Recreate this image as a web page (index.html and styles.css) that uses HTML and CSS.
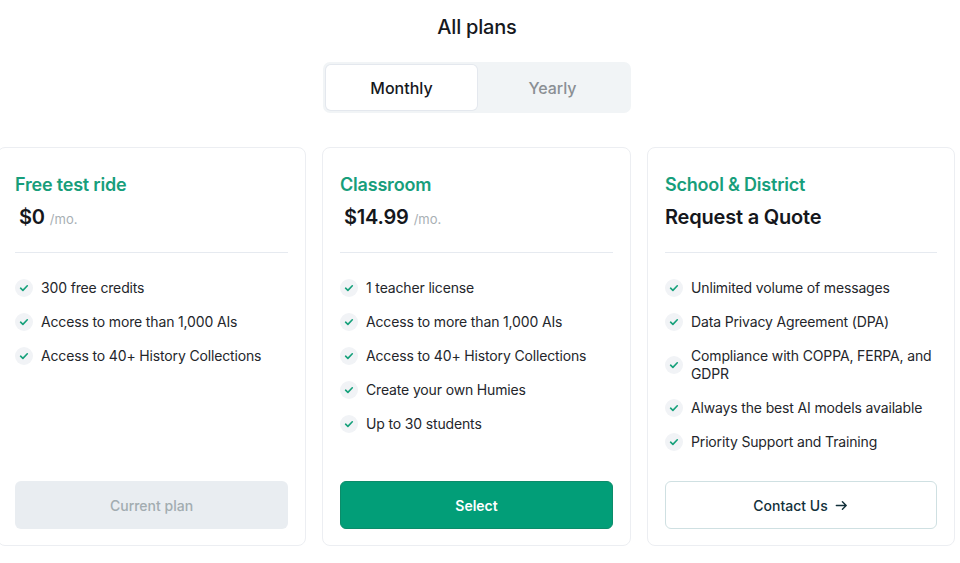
FILE: index.html
```html
<!DOCTYPE html>
<html lang="en">
<head>
<meta charset="utf-8">
<title>All plans</title>
<link rel="stylesheet" href="styles.css">
</head>
<body>
<main class="page">
  <h1 class="page-title">All plans</h1>
  <div class="toggle">
    <button class="toggle-btn active">Monthly</button>
    <button class="toggle-btn">Yearly</button>
  </div>
  <section class="cards">
    <article class="card">
      <h2 class="plan-name">Free test ride</h2>
      <div class="price"><span class="amount">$0</span><span class="per">/mo.</span></div>
      <hr class="divider">
      <ul class="features">
        <li><span class="check"><svg viewBox="0 0 18 18" width="18" height="18"><path d="M5.6 9.2l2.3 2.2 4.4-4.6" fill="none" stroke="#14a07a" stroke-width="1.6" stroke-linecap="round" stroke-linejoin="round"/></svg></span><span>300 free credits</span></li>
        <li><span class="check"><svg viewBox="0 0 18 18" width="18" height="18"><path d="M5.6 9.2l2.3 2.2 4.4-4.6" fill="none" stroke="#14a07a" stroke-width="1.6" stroke-linecap="round" stroke-linejoin="round"/></svg></span><span>Access to more than 1,000 AIs</span></li>
        <li><span class="check"><svg viewBox="0 0 18 18" width="18" height="18"><path d="M5.6 9.2l2.3 2.2 4.4-4.6" fill="none" stroke="#14a07a" stroke-width="1.6" stroke-linecap="round" stroke-linejoin="round"/></svg></span><span>Access to 40+ History Collections</span></li>
      </ul>
      <button class="btn btn-disabled">Current plan</button>
    </article>
    <article class="card">
      <h2 class="plan-name">Classroom</h2>
      <div class="price"><span class="amount">$14.99</span><span class="per">/mo.</span></div>
      <hr class="divider">
      <ul class="features">
        <li><span class="check"><svg viewBox="0 0 18 18" width="18" height="18"><path d="M5.6 9.2l2.3 2.2 4.4-4.6" fill="none" stroke="#14a07a" stroke-width="1.6" stroke-linecap="round" stroke-linejoin="round"/></svg></span><span>1 teacher license</span></li>
        <li><span class="check"><svg viewBox="0 0 18 18" width="18" height="18"><path d="M5.6 9.2l2.3 2.2 4.4-4.6" fill="none" stroke="#14a07a" stroke-width="1.6" stroke-linecap="round" stroke-linejoin="round"/></svg></span><span>Access to more than 1,000 AIs</span></li>
        <li><span class="check"><svg viewBox="0 0 18 18" width="18" height="18"><path d="M5.6 9.2l2.3 2.2 4.4-4.6" fill="none" stroke="#14a07a" stroke-width="1.6" stroke-linecap="round" stroke-linejoin="round"/></svg></span><span>Access to 40+ History Collections</span></li>
        <li><span class="check"><svg viewBox="0 0 18 18" width="18" height="18"><path d="M5.6 9.2l2.3 2.2 4.4-4.6" fill="none" stroke="#14a07a" stroke-width="1.6" stroke-linecap="round" stroke-linejoin="round"/></svg></span><span>Create your own Humies</span></li>
        <li><span class="check"><svg viewBox="0 0 18 18" width="18" height="18"><path d="M5.6 9.2l2.3 2.2 4.4-4.6" fill="none" stroke="#14a07a" stroke-width="1.6" stroke-linecap="round" stroke-linejoin="round"/></svg></span><span>Up to 30 students</span></li>
      </ul>
      <button class="btn btn-primary">Select</button>
    </article>
    <article class="card">
      <h2 class="plan-name">School &amp; District</h2>
      <div class="price quote"><span class="amount">Request a Quote</span></div>
      <hr class="divider">
      <ul class="features">
        <li><span class="check"><svg viewBox="0 0 18 18" width="18" height="18"><path d="M5.6 9.2l2.3 2.2 4.4-4.6" fill="none" stroke="#14a07a" stroke-width="1.6" stroke-linecap="round" stroke-linejoin="round"/></svg></span><span>Unlimited volume of messages</span></li>
        <li><span class="check"><svg viewBox="0 0 18 18" width="18" height="18"><path d="M5.6 9.2l2.3 2.2 4.4-4.6" fill="none" stroke="#14a07a" stroke-width="1.6" stroke-linecap="round" stroke-linejoin="round"/></svg></span><span>Data Privacy Agreement (DPA)</span></li>
        <li><span class="check"><svg viewBox="0 0 18 18" width="18" height="18"><path d="M5.6 9.2l2.3 2.2 4.4-4.6" fill="none" stroke="#14a07a" stroke-width="1.6" stroke-linecap="round" stroke-linejoin="round"/></svg></span><span>Compliance with COPPA, FERPA, and GDPR</span></li>
        <li><span class="check"><svg viewBox="0 0 18 18" width="18" height="18"><path d="M5.6 9.2l2.3 2.2 4.4-4.6" fill="none" stroke="#14a07a" stroke-width="1.6" stroke-linecap="round" stroke-linejoin="round"/></svg></span><span>Always the best AI models available</span></li>
        <li><span class="check"><svg viewBox="0 0 18 18" width="18" height="18"><path d="M5.6 9.2l2.3 2.2 4.4-4.6" fill="none" stroke="#14a07a" stroke-width="1.6" stroke-linecap="round" stroke-linejoin="round"/></svg></span><span>Priority Support and Training</span></li>
      </ul>
      <button class="btn btn-outline">Contact Us <svg class="arrow" viewBox="0 0 16 16" width="15" height="15"><path d="M2.5 8h10.5M9 4l4 4-4 4" fill="none" stroke="#12303a" stroke-width="1.5" stroke-linecap="round" stroke-linejoin="round"/></svg></button>
    </article>
  </section>
</main>
</body>
</html>
```

FILE: styles.css
```css
* { box-sizing: border-box; }
html, body {
  margin: 0;
  padding: 0;
  background: #ffffff;
}
body {
  font-family: Inter, "Noto Sans", "Liberation Sans", sans-serif;
  color: #1b1d22;
  overflow: hidden;
}
.page {
  width: 960px;
  display: flex;
  flex-direction: column;
  align-items: center;
}
.page-title {
  margin: 15px 0 0;
  font-size: 20px;
  line-height: 24px;
  font-weight: 500;
  color: #16181d;
  letter-spacing: -0.2px;
  transform: translateX(-3px);
}
.toggle {
  margin-top: 23px;
  width: 308px;
  height: 51px;
  padding: 3px;
  display: flex;
  background: #f1f4f6;
  border-radius: 7px;
  transform: translateX(-3px);
}
.toggle-btn {
  flex: 1;
  border: none;
  background: transparent;
  font-family: inherit;
  font-size: 16px;
  font-weight: 500;
  color: #8a8f94;
  border-radius: 5px;
  padding: 0;
}
.toggle-btn.active {
  background: #ffffff;
  color: #16181d;
  box-shadow: 0 0 0 1px #e4e8ee;
}
.cards {
  margin-top: 34px;
  display: grid;
  grid-template-columns: 309px 309px 308px;
  gap: 16px;
  width: 958px;
  transform: translateX(-4px);
}
.card {
  height: 399px;
  border: 1px solid #eceef2;
  border-radius: 8px;
  padding: 25px 17px 16px;
  display: flex;
  flex-direction: column;
  background: #fff;
}
.plan-name {
  margin: 0;
  font-size: 18px;
  line-height: 24px;
  font-weight: 600;
  color: #179e7b;
  letter-spacing: -0.2px;
}
.price {
  margin-top: 6px;
  height: 28px;
  display: flex;
  align-items: baseline;
  gap: 5px;
  padding-left: 4px;
}
.price.quote { padding-left: 0; }
.amount {
  font-size: 20px;
  line-height: 28px;
  font-weight: 600;
  color: #15171c;
  letter-spacing: -0.2px;
}
.per {
  font-size: 13px;
  color: #a8afb4;
}
.divider {
  margin: 21px 0 0;
  border: none;
  border-top: 1px solid #e6eaf0;
  height: 0;
}
.features {
  list-style: none;
  margin: 26px 0 0;
  padding: 0;
  display: flex;
  flex-direction: column;
  gap: 16px;
  flex: 1;
}
.features li {
  display: flex;
  align-items: center;
  gap: 8px;
  font-size: 14px;
  line-height: 18px;
  color: #24262b;
  letter-spacing: -0.15px;
}
.check {
  flex: 0 0 18px;
  width: 18px;
  height: 18px;
  border-radius: 50%;
  background: #f1f3f6;
  display: flex;
}
.btn {
  height: 48px;
  flex: 0 0 48px;
  width: 100%;
  border-radius: 6px;
  font-family: inherit;
  font-size: 14px;
  font-weight: 500;
  display: flex;
  align-items: center;
  justify-content: center;
  gap: 6px;
  padding: 0;
}
.btn-disabled {
  border: none;
  background: #e9edf1;
  color: #a2acb0;
}
.btn-primary {
  border: 1px solid #0c8c6a;
  background: #029e78;
  color: #ffffff;
  font-weight: 600;
}
.btn-outline {
  border: 1px solid #cfe0e2;
  background: #ffffff;
  color: #12303a;
}
.arrow { display: block; }
```
